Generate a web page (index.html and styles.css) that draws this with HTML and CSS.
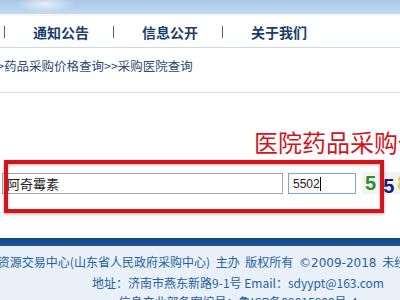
FILE: index.html
```html
<!DOCTYPE html>
<html lang="zh-CN">
<head>
<meta charset="utf-8">
<title>采购医院查询</title>
<link rel="stylesheet" href="styles.css">
</head>
<body>
<div class="page">
  <div class="banner"></div>
  <nav class="nav">
    <span class="sep"></span><a class="nav-item">通知公告</a>
    <span class="sep"></span><a class="nav-item">信息公开</a>
    <span class="sep"></span><a class="nav-item">关于我们</a>
  </nav>
  <div class="crumb">&gt;药品采购价格查询&gt;&gt;采购医院查询</div>
  <h1 class="title">医院药品采购信息查询</h1>
  <div class="search">
    <div class="form-row">
      <input class="field name" type="text" value="阿奇霉素">
      <input class="field code" type="text" value="5502">
      <div class="captcha"><span class="d1">5</span><span class="d2">5</span><span class="d3">8</span></div>
    </div>
    <div class="highlight"></div>
  </div>
  <footer class="footer">
    <div class="bar"></div>
    <div class="lines">
      <p class="wide">山东省公共资源交易中心(山东省人民政府采购中心) 主办 版权所有 <span class="latin">©2009-2018</span> 未经许可不得转载或建立镜像</p>
      <p>地址：济南市燕东新路9-1号 Email：sdyypt@163.com</p>
      <p>信息产业部备案编号：鲁ICP备09015800号-4</p>
    </div>
  </footer>
</div>
</body>
</html>
```
FILE: styles.css
```css
html, body {
  margin: 0;
  padding: 0;
  background: #ffffff;
}
body {
  width: 400px;
  height: 300px;
  overflow: hidden;
  font-family: "Noto Sans CJK SC", "Liberation Sans", sans-serif;
}
.page {
  width: 400px;
}
.banner {
  height: 14px;
  background:
    radial-gradient(ellipse 30px 8px at 45px 4px, rgba(255,255,255,0.7), rgba(255,255,255,0) 100%),
    linear-gradient(#a7c6e8, #c4daf1);
  border-bottom: 2px solid #f4f8fc;
}
.nav {
  height: 31px;
  display: flex;
  align-items: center;
  padding-left: 4px;
  background: #ffffff;
  border-bottom: 1px solid #c9d9ea;
}
.sep {
  flex-shrink: 0;
  width: 1px;
  height: 12px;
  background: #50647e;
}
.nav-item {
  flex-shrink: 0;
  margin: 0 24px 0 28px;
  font-size: 14px;
  line-height: 20px;
  font-weight: 700;
  color: #1c3e6c;
  white-space: nowrap;
}
.crumb {
  height: 44px;
  line-height: 36px;
  font-size: 12.5px;
  color: #2b4c70;
  margin-left: -3px;
  border-bottom: 1px solid #dcdfe4;
  white-space: nowrap;
}
.title {
  margin: 34px 0 0 0;
  padding-left: 254px;
  height: 30px;
  line-height: 30px;
  font-size: 24px;
  font-weight: 400;
  color: #d4141c;
  white-space: nowrap;
  overflow: hidden;
}
.search {
  position: relative;
  margin-top: 16px;
  height: 21px;
}
.form-row {
  display: flex;
  align-items: flex-start;
  padding-left: 2px;
}
.field {
  flex-shrink: 0;
  box-sizing: border-box;
  height: 21px;
  margin: 0;
  padding: 0 4px;
  outline: none;
  background-color: #ffffff;
  color: #222222;
}
.name {
  width: 281px;
  border: 1px solid #a9a9a9;
  font-family: "Noto Sans CJK SC", sans-serif;
  font-size: 13px;
}
.code {
  margin-left: 5px;
  width: 68px;
  border: 1px solid #7ea6d6;
  box-shadow: inset 0 0 1px #b9d1ee;
  font-family: "Liberation Sans", sans-serif;
  font-size: 12px;
  background-image: linear-gradient(#000000, #000000);
  background-repeat: no-repeat;
  background-position: 31px 3px;
  background-size: 1px 14px;
}
.captcha {
  flex-shrink: 0;
  margin-left: 6px;
  margin-top: -1px;
  height: 22px;
  width: 60px;
  background: #f3f3f1;
  display: flex;
  align-items: flex-start;
  font-family: "Liberation Sans", sans-serif;
  font-weight: 700;
  font-size: 20px;
  line-height: 20px;
  padding-left: 3px;
  overflow: hidden;
}
.d1 {
  color: #2f8b32;
  padding-top: 1px;
}
.d2 {
  color: #1b1c78;
  margin-left: 7px;
  padding-top: 4px;
}
.d3 {
  color: #e2c76a;
  margin-left: 3px;
  padding-top: 1px;
}
.highlight {
  position: absolute;
  left: 4px;
  top: -13px;
  width: 380px;
  height: 53px;
  box-sizing: border-box;
  border: 4px solid #d5131b;
  box-shadow: 0 1px 3px rgba(0,0,0,0.35), inset 0 1px 3px rgba(0,0,0,0.3);
  pointer-events: none;
}
.footer {
  margin-top: 44px;
}
.bar {
  height: 8px;
  background: linear-gradient(#124784, #1d5596);
}
.lines {
  width: 476px;
  height: 60px;
  padding-top: 6px;
  background: #e9f0f7;
  display: flex;
  flex-direction: column;
  align-items: center;
}
.lines p {
  margin: 0;
  font-size: 12px;
  line-height: 19px;
  color: #2462a0;
  white-space: nowrap;
}
.lines .wide {
  word-spacing: 3px;
}
.latin {
  font-family: "DejaVu Sans", sans-serif;
  font-size: 12px;
  word-spacing: 0;
}
```
